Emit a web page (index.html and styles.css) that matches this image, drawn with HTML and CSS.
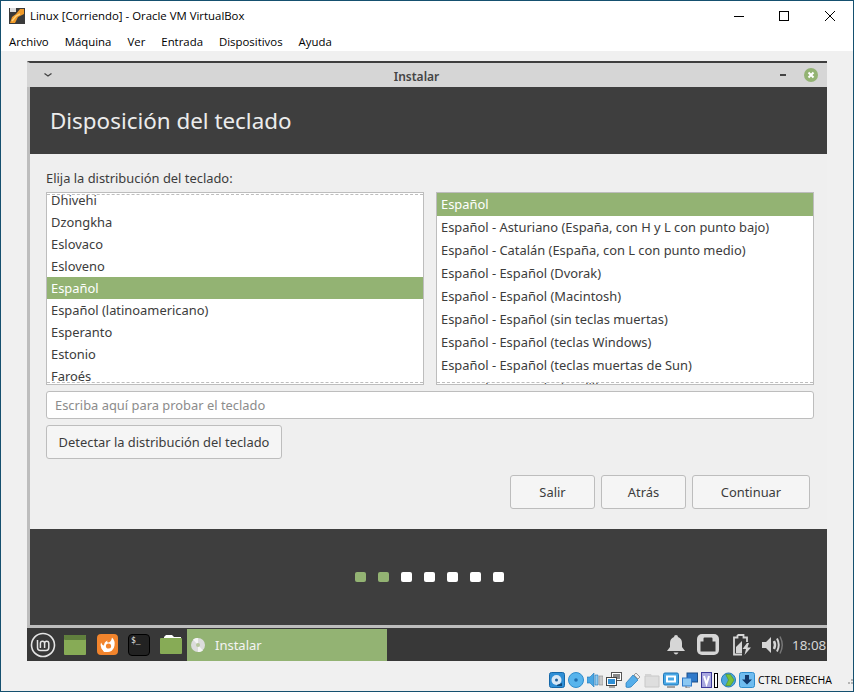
FILE: index.html
```html
<!DOCTYPE html>
<html>
<head>
  <title>Linux [Corriendo] - Oracle VM VirtualBox</title>
  <link rel="stylesheet" href="styles.css">
</head>
<body>
  <div class="vbox">
    <div class="titlebar">
      <svg class="app-icon" width="16" height="16" viewBox="0 0 16 16">
        <rect width="16" height="16" fill="#3a3a3a"/>
        <path d="M1 15 L6 15 L9 9 L15 6 L15 1 L11 1 L7 6 L3 9 Z" fill="#f09a28"/>
        <path d="M3 13 L7 8 L11 6" stroke="#ffd27a" stroke-width="1.5" fill="none"/>
        <rect x="1" y="0" width="6" height="4" fill="#ddd"/>
      </svg>
      <span class="app-title">Linux [Corriendo] - Oracle VM VirtualBox</span>
      <div class="win-btns">
        <svg width="10" height="10" viewBox="0 0 10 10"><path d="M0 5.5H10" stroke="#000"/></svg>
        <svg width="10" height="10" viewBox="0 0 10 10"><rect x=".5" y=".5" width="9" height="9" fill="none" stroke="#000"/></svg>
        <svg class="win-close" width="10" height="10" viewBox="0 0 10 10"><path d="M0 0L10 10M10 0L0 10" stroke="#000" stroke-width="1"/></svg>
      </div>
    </div>
    <div class="menubar">
      <span>Archivo</span><span>Máquina</span><span>Ver</span><span>Entrada</span><span>Dispositivos</span><span>Ayuda</span>
    </div>

    <div class="guest">
      <div class="install-win">
        <div class="wm-bar">
          <svg class="wm-menu" width="8" height="4" viewBox="0 0 8 4"><path d="M.5 .5L4 3L7.5 .5" fill="none" stroke="#444" stroke-width="1.3"/></svg>
          <span class="wm-title">Instalar</span>
          <span class="wm-min"></span>
          <svg class="wm-close" width="14" height="14" viewBox="0 0 14 14"><circle cx="7" cy="7" r="7" fill="#93b373"/><path d="M4.5 4.5L9.5 9.5M9.5 4.5L4.5 9.5" stroke="#fff" stroke-width="2"/></svg>
        </div>
        <div class="page-head">Disposición del teclado</div>
        <div class="page-body">
          <div class="choose-label">Elija la distribución del teclado:</div>
          <div class="lists">
            <div class="list list-left">
              <div class="row">Dhivehi</div>
              <div class="row">Dzongkha</div>
              <div class="row">Eslovaco</div>
              <div class="row">Esloveno</div>
              <div class="row selected">Español</div>
              <div class="row">Español (latinoamericano)</div>
              <div class="row">Esperanto</div>
              <div class="row">Estonio</div>
              <div class="row">Faroés</div>
            </div>
            <div class="list list-right">
              <div class="row selected">Español</div>
              <div class="row">Español - Asturiano (España, con H y L con punto bajo)</div>
              <div class="row">Español - Catalán (España, con L con punto medio)</div>
              <div class="row">Español - Español (Dvorak)</div>
              <div class="row">Español - Español (Macintosh)</div>
              <div class="row">Español - Español (sin teclas muertas)</div>
              <div class="row">Español - Español (teclas Windows)</div>
              <div class="row">Español - Español (teclas muertas de Sun)</div>
              <div class="row">Español - Español (virgulilla muerta)</div>
            </div>
          </div>
          <input class="test-input" type="text" placeholder="Escriba aquí para probar el teclado">
          <button class="btn btn-detect">Detectar la distribución del teclado</button>
          <div class="actions">
            <button class="btn btn-quit">Salir</button>
            <button class="btn btn-back">Atrás</button>
            <button class="btn btn-next">Continuar</button>
          </div>
        </div>
        <div class="progress">
          <span class="dot done"></span><span class="dot done"></span><span class="dot"></span><span class="dot"></span><span class="dot"></span><span class="dot"></span><span class="dot"></span>
        </div>
      </div>

      <div class="panel">
        <svg class="mint-logo" width="26" height="26" viewBox="0 0 26 26">
          <circle cx="13" cy="13" r="11.5" fill="none" stroke="#e4e4e4" stroke-width="1.6"/>
          <path d="M7.5 8V15.5Q7.5 18.5 10.5 18.5H16Q18.8 18.5 18.8 15.5V11.5Q18.8 9.3 16.7 9.3Q14.6 9.3 14.6 11.5V16M14.6 11.5Q14.6 9.3 12.5 9.3Q10.4 9.3 10.4 11.5V16" fill="none" stroke="#e4e4e4" stroke-width="1.5"/>
        </svg>
        <svg class="launch launch-desk" width="22" height="20" viewBox="0 0 22 20">
          <rect width="22" height="20" rx="1" fill="#87ab56"/>
          <rect width="22" height="5" rx="1" fill="#607f3d"/>
        </svg>
        <svg class="launch launch-fox" width="21" height="21" viewBox="0 0 21 21">
          <rect width="21" height="21" rx="4" fill="#f2842c"/>
          <path d="M15 3.500Q18.500 7 17.500 11.500A7 7 0 1 1 4 8.500Q5 11 7 11.500Q7 8 10.500 6.500Q9.500 8.500 11 8.500Q14 8.500 15 3.500Z" fill="#fff"/>
          <circle cx="11.500" cy="12" r="2.600" fill="#f2842c"/>
          <path d="M4.500 14Q8 16.500 13 14.500L11 18H7Z" fill="#fff"/>
        </svg>
        <div class="launch launch-term">$_</div>
        <svg class="launch launch-folder" width="22" height="19" viewBox="0 0 22 19">
          <path d="M6 0H12L14 2H21V5H4V2Z" fill="#fff"/>
          <path d="M1 3H21Q22 3 22 4V18Q22 19 21 19H1Q0 19 0 18V4Q0 3 1 3Z" fill="#87ab56"/>
        </svg>
        <div class="task">
          <svg width="14" height="14" viewBox="0 0 14 14">
            <circle cx="7" cy="7" r="7" fill="#dcdcdc"/>
            <path d="M7 7L2 1.5A7 7 0 0 1 7 0Z" fill="#f4f4f4"/>
            <path d="M7 7L12 12.5A7 7 0 0 1 7 14Z" fill="#f4f4f4"/>
            <circle cx="7" cy="7" r="2" fill="#b7c79e"/>
          </svg>
          <span>Instalar</span>
        </div>
        <div class="tray">
          <svg width="18" height="21" viewBox="0 0 18 21">
            <path d="M9 1Q11 1 11 3Q15 4.500 15 9V13L18 17H0L3 13V9Q3 4.500 7 3Q7 1 9 1Z" fill="#d6d6d6"/>
            <path d="M6.500 18.500H11.500Q10.500 20.500 9 20.500Q7.500 20.500 6.500 18.500Z" fill="#d6d6d6"/>
          </svg>
          <svg class="tray-net" width="22" height="21" viewBox="0 0 22 21">
            <rect width="22" height="21" rx="5" fill="#d6d6d6"/>
            <path d="M3.500 17.500V7.500H6.500V4.500Q6.500 3.500 7.500 3.500H14.500Q15.500 3.500 15.500 4.500V7.500H18.500V17.500Z" fill="#383838"/>
          </svg>
          <svg class="tray-bat" width="20" height="22" viewBox="0 0 20 22">
            <path d="M5.500 1H11.500V3.500H15V8M10 20.500H2V3.500H5.500V1" fill="none" stroke="#d6d6d6" stroke-width="1.800"/>
            <path d="M4 13L10 7V19H4Z" fill="#d6d6d6"/>
            <path d="M15 9L10.500 15H14L12.500 21L19 13.500H15.500L17 9Z" fill="#d6d6d6"/>
          </svg>
          <svg class="tray-vol" width="22" height="20" viewBox="0 0 22 20">
            <path d="M0 7H4L9 2V18L4 13H0Z" fill="#d6d6d6"/>
            <path d="M12 6Q14 10 12 14" fill="none" stroke="#d6d6d6" stroke-width="2.500"/>
            <path d="M15 3.500Q18.500 10 15 16.500" fill="none" stroke="#d6d6d6" stroke-width="2"/>
            <path d="M18 1.500Q22.500 10 18 18.500" fill="none" stroke="#777" stroke-width="1.500"/>
          </svg>
          <span class="clock">18:08</span>
        </div>
      </div>
    </div>

    <div class="statusbar">
      <svg width="16" height="16" viewBox="0 0 16 16"><rect x=".5" y=".5" width="15" height="15" rx="2" fill="#2f8fd6" stroke="#1567a8"/><circle cx="7.500" cy="8" r="5" fill="#d9e8f5"/><circle cx="7.500" cy="8" r="1.500" fill="#1e5d96"/><path d="M8 13L13 11V14H8Z" fill="#124a7c"/></svg>
      <svg width="16" height="16" viewBox="0 0 16 16"><circle cx="8" cy="8" r="7.500" fill="#58b4ec" stroke="#2f8ccc"/><circle cx="8" cy="8" r="1.800" fill="#1f6fb0"/></svg>
      <svg width="16" height="16" viewBox="0 0 16 16"><path d="M0 5H3L7 1V15L3 11H0Z" fill="#4aa6e2" stroke="#1f77b8" stroke-width=".6"/><path d="M8 3H11V13H8Z" fill="#8fcaf0" stroke="#1f77b8" stroke-width=".6"/><path d="M12 4H16V13H12Z" fill="#c9c9c9" stroke="#8a8a8a" stroke-width=".6"/></svg>
      <svg width="16" height="16" viewBox="0 0 16 16"><rect x="5.500" y=".5" width="10" height="8" fill="#fff" stroke="#555"/><rect x="7" y="2" width="7" height="5" fill="#888"/><rect x=".5" y="5.500" width="10" height="8" fill="#fff" stroke="#444"/><rect x="2" y="7" width="7" height="5" fill="#2f8fd6"/><path d="M3 15H9" stroke="#555"/></svg>
      <svg width="16" height="16" viewBox="0 0 16 16"><path d="M1 11L8 3L13 8L6 15Q2 16 1 15Z" fill="#55aeea" stroke="#1f77b8" stroke-width=".7"/><path d="M9 3L11 1L15 5L13 7Z" fill="#eee" stroke="#777" stroke-width=".7"/></svg>
      <svg width="16" height="16" viewBox="0 0 16 16"><path d="M1 4H15V15H1Z" fill="#dedede" stroke="#c8c8c8"/><path d="M1 4V2H7L8 4Z" fill="#d4d4d4"/></svg>
      <svg width="16" height="16" viewBox="0 0 16 16"><rect x=".5" y="1" width="15" height="12" rx="1.500" fill="#49a8e6" stroke="#1f77b8"/><rect x="3" y="3.500" width="10" height="7" fill="#fff"/><rect x="5" y="5.500" width="6" height="3" fill="#49a8e6"/><path d="M4 15H12" stroke="#888" stroke-width="1.500"/></svg>
      <svg width="16" height="16" viewBox="0 0 16 16"><rect x="5" y="1" width="10.500" height="9" fill="#2f79c9" stroke="#1c4f87"/><rect x=".5" y="6" width="9" height="8" fill="#8cc8f2" stroke="#2f79c9"/><path d="M4 14V16H8" fill="none" stroke="#777"/></svg>
      <svg width="11" height="16" viewBox="0 0 11 16"><rect x=".5" y=".5" width="10" height="15" fill="#a9a8e0" stroke="#3d3a9a"/><path d="M3 4L5.500 12L8 4" fill="none" stroke="#fff" stroke-width="2"/></svg>
      <span class="st-caret"></span>
      <svg width="15" height="16" viewBox="0 0 16 16"><circle cx="8" cy="8" r="7.500" fill="#4ca7de" stroke="#1f77b8"/><path d="M5 2H10L14 8L10 14H5L8 8Z" fill="#79c13a" stroke="#4b8b1f" stroke-width=".6"/></svg>
      <svg width="16" height="16" viewBox="0 0 16 16"><rect x=".5" y=".5" width="15" height="15" rx="2" fill="#6fbcf0" stroke="#2f8ccc"/><path d="M6 3H10V7.500H13L8 12.500L3 7.500H6Z" fill="#12386b"/></svg>
      <span class="host-key">CTRL DERECHA</span>
      <svg class="grip" width="10" height="10" viewBox="0 0 10 10"><g fill="#b5b5b5"><rect x="7" y="1" width="2" height="2"/><rect x="4" y="4" width="2" height="2"/><rect x="7" y="4" width="2" height="2"/><rect x="1" y="7" width="2" height="2"/><rect x="4" y="7" width="2" height="2"/><rect x="7" y="7" width="2" height="2"/></g></svg>
    </div>
  </div>
</body>
</html>
```

FILE: styles.css
```css
html, body {
  margin: 0;
  padding: 0;
}

.vbox {
  width: 854px;
  height: 692px;
  box-sizing: border-box;
  border: 1px solid #15506f;
  background: #f0f0f0;
  display: flex;
  flex-direction: column;
  overflow: hidden;
  font-family: "Open Sans", sans-serif;
}

/* host window chrome */
.titlebar {
  height: 29px;
  background: #fff;
  display: flex;
  align-items: center;
  padding-left: 8px;
  font-size: 11.4px;
  color: #000;
}

.app-icon {
  margin-right: 5px;
}

.win-btns {
  margin-left: auto;
  display: flex;
  gap: 35px;
  padding-right: 18px;
}

.win-close {
  margin-left: 1px;
}

.menubar {
  height: 21px;
  box-sizing: border-box;
  padding: 1px 0 0 8px;
  background: #fff;
  display: flex;
  align-items: center;
  gap: 16px;
  font-size: 11.4px;
  color: #000;
}

/* guest screen */
.guest {
  margin: 10px 0 0 26px;
  width: 800px;
  height: 600px;
  display: flex;
  flex-direction: column;
  font-family: "Noto Sans", sans-serif;
  color: #3c3c3c;
}

.install-win {
  height: 567px;
  box-sizing: border-box;
  border-top: 2px solid #3e3e3e;
  border-left: 3px solid #bdbdbd;
  border-bottom: 3px solid #bdbdbd;
  display: flex;
  flex-direction: column;
}

.wm-bar {
  height: 24px;
  margin-left: -3px;
  padding: 0 9px 0 17px;
  background: #d6d6d6;
  display: flex;
  align-items: center;
}

.wm-title {
  flex: 1;
  text-align: center;
  padding: 2px 0 0 1px;
  font-size: 12px;
  font-weight: 600;
  color: #444;
}

.wm-min {
  width: 6px;
  height: 2px;
  background: #444;
  margin-right: 18px;
}

.page-head {
  height: 67px;
  box-sizing: border-box;
  background: #3e3e3e;
  color: #ececec;
  padding-left: 20px;
  display: flex;
  align-items: center;
  font-size: 22.4px;
}

.page-body {
  flex: 1;
  background: #efefef;
  padding: 0 13px 0 16px;
  display: flex;
  flex-direction: column;
  font-size: 12.9px;
}

.choose-label {
  height: 38px;
  box-sizing: border-box;
  padding-top: 15px;
  line-height: 18px;
}

.lists {
  display: grid;
  grid-template-columns: 378px 378px;
  gap: 12px;
}

.list {
  height: 193px;
  box-sizing: border-box;
  border: 1px solid #bdbdbd;
  background: #fff;
  overflow: hidden;
  position: relative;
}

/* scroll undershoot marks */
.list::before,
.list::after {
  content: "";
  position: absolute;
  left: 0;
  right: 0;
  height: 0;
  border-top: 1px dashed #bdbdbd;
}

.list::before {
  top: 1px;
}

.list::after {
  bottom: 1px;
}

.list-right::before {
  display: none;
}

.row {
  padding-left: 4px;
  white-space: nowrap;
  display: flex;
  align-items: center;
  box-sizing: border-box;
}

.list-left .row {
  height: 22px;
}

.list-left .row:first-child {
  margin-top: -4px;
}

.list-right .row {
  height: 23px;
  padding-bottom: 2px;
}

.row.selected {
  background: #93b373;
  color: #fff;
}

.test-input {
  margin-top: 6px;
  height: 28px;
  box-sizing: border-box;
  border: 1px solid #bdbdbd;
  border-radius: 3px;
  background: #fff;
  padding: 0 8px;
  font: inherit;
}

.test-input::placeholder {
  color: #8c8c8c;
  opacity: 1;
}

.btn {
  height: 34px;
  box-sizing: border-box;
  border: 1px solid #bdbdbd;
  border-radius: 3px;
  background: #f5f5f5;
  color: #3c3c3c;
  font: inherit;
  padding: 0;
}

.btn-detect {
  margin-top: 6px;
  width: 236px;
}

.actions {
  margin-top: 16px;
  display: flex;
  gap: 6px;
  justify-content: flex-end;
  padding-right: 4px;
}

.btn-quit,
.btn-back {
  width: 85px;
}

.btn-next {
  width: 118px;
}

.progress {
  height: 96px;
  background: #3e3e3e;
  display: flex;
  align-items: center;
  gap: 12px;
  padding-left: 325px;
}

.dot {
  width: 11px;
  height: 10px;
  border-radius: 2px;
  background: #fff;
}

.dot.done {
  background: #93b373;
}

/* guest panel */
.panel {
  height: 33px;
  background: #383838;
  display: flex;
  align-items: center;
}

.mint-logo {
  margin-left: 3px;
}

.launch-desk {
  margin-left: 8px;
}

.launch-fox {
  margin-left: 11px;
}

.launch-term {
  margin-left: 10px;
  width: 22px;
  height: 22px;
  box-sizing: border-box;
  border: 1px solid #000;
  border-radius: 4px;
  background: #222;
  color: #eee;
  font: 8px/12px "DejaVu Sans Mono", monospace;
  padding-left: 2px;
}

.launch-folder {
  margin-left: 10px;
}

.task {
  margin-left: 5px;
  width: 200px;
  height: 32px;
  margin-top: 1px;
  background: #93b373;
  color: #f4f4f4;
  display: flex;
  align-items: center;
  gap: 10px;
  padding-left: 4px;
  box-sizing: border-box;
  font-size: 13px;
}

.tray {
  margin-left: auto;
  display: flex;
  align-items: center;
  color: #d6d6d6;
}

.tray-net {
  margin-left: 12px;
}

.tray-bat {
  margin-left: 13px;
}

.tray-vol {
  margin-left: 10px;
}

.clock {
  margin-left: 8px;
  width: 35px;
  font-size: 13.4px;
}

/* host status bar */
.statusbar {
  height: 22px;
  margin-top: 8px;
  display: flex;
  align-items: center;
  gap: 3px;
  padding-left: 548px;
  font-size: 10.5px;
  color: #000;
}

.statusbar svg {
  flex-shrink: 0;
}

.st-caret {
  width: 2px;
  height: 13px;
  margin-left: -1px;
  border: 1px solid #000;
  background: #fff;
  flex-shrink: 0;
}

.host-key {
  white-space: nowrap;
}

.grip {
  margin-left: 12px;
}
```
